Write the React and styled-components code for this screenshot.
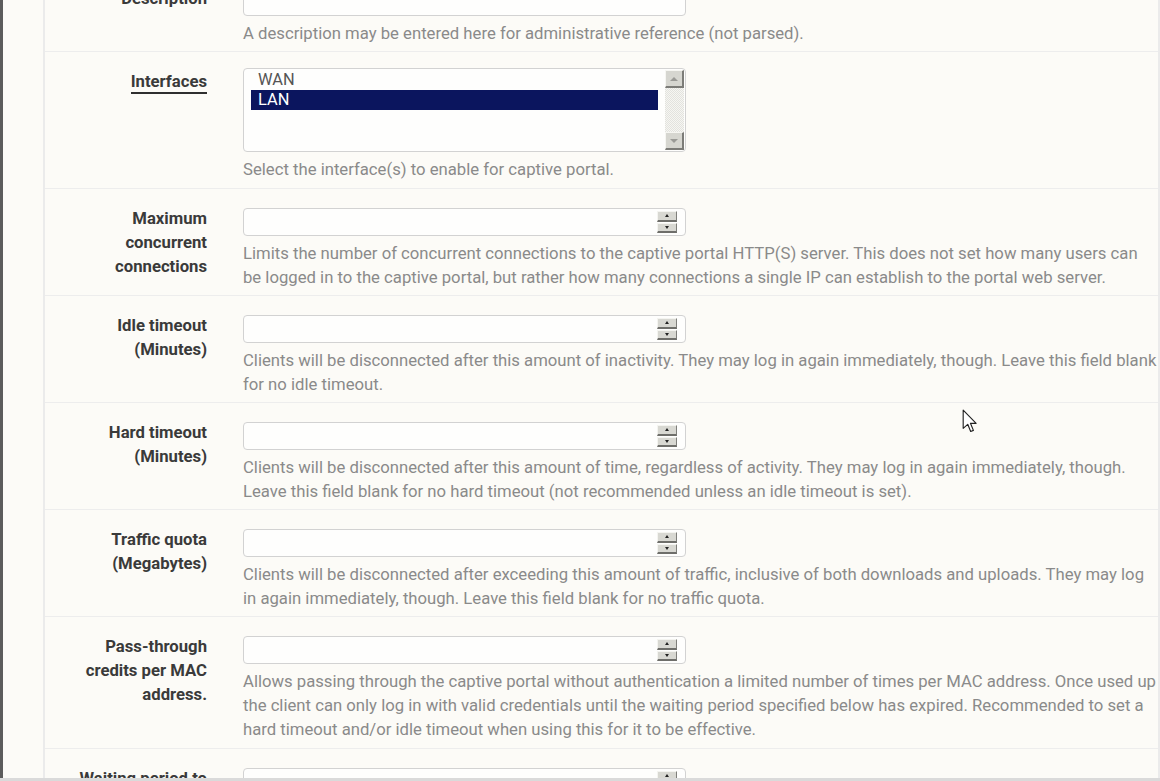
import styled, { createGlobalStyle } from "styled-components";

const GlobalStyle = createGlobalStyle`
  html, body {
    margin: 0;
    padding: 0;
    background: #fcfbf7;
    overflow: hidden;
  }
  body {
    font-family: Roboto, "Liberation Sans", sans-serif;
  }
`;

const Screen = styled.div`
  display: flex;
  flex-direction: column;
  width: 1160px;
  height: 781px;
`;

const Viewport = styled.div`
  position: relative;
  flex: 1;
  display: flex;
  overflow: hidden;
  border-left: 3px solid #5c5c5c;
  border-right: 2px solid #ebebeb;
`;

const BottomEdge = styled.div`
  height: 3px;
  background: #dadada;
`;

const Panel = styled.div`
  margin-left: 40px;
  margin-top: -31px;
  min-width: 1200px;
  border-left: 2px solid #ebebeb;
`;

const Row = styled.div`
  display: grid;
  grid-template-columns: 162px 1fr;
  column-gap: 36px;
  padding: ${(p) => p.$top}px 0 ${(p) => p.$bottom}px;
  border-bottom: 1px solid #ededed;
`;

const Label = styled.div`
  text-align: right;
  font-size: 16.7px;
  font-weight: 700;
  line-height: 24px;
  color: #3a3a3a;
  white-space: nowrap;
  padding-top: ${(p) => p.$offset || 0}px;
`;

const Abbr = styled.span`
  border-bottom: 2px solid #2f2f2f;
  padding-bottom: 1px;
`;

const Field = styled.div`
  display: flex;
  flex-direction: column;
  padding-top: 1px;
`;

const TextBox = styled.div`
  box-sizing: border-box;
  width: 443px;
  height: 28px;
  border: 1px solid #d2d2d2;
  border-radius: 4px;
  background: #fefefd;
  display: flex;
  align-items: center;
  justify-content: flex-end;
  padding-right: 8px;
`;

const Spinner = styled.div`
  display: flex;
  flex-direction: column;
  width: 20px;
  height: 22px;
  gap: 1px;
`;

const SpinBtn = styled.div`
  flex: 1;
  box-sizing: border-box;
  background: #d8d8d2;
  border-top: 1px solid #f4f4f0;
  border-left: 1px solid #f4f4f0;
  border-right: 1px solid #7e7e7a;
  border-bottom: 2px solid #6e6e6a;
  display: flex;
  align-items: center;
  justify-content: center;

  &::after {
    content: "";
    border-left: 2px solid transparent;
    border-right: 2px solid transparent;
    ${(p) =>
      p.$down ? "border-top: 3px solid #222;" : "border-bottom: 3px solid #222;"}
  }
`;

const Help = styled.div`
  margin-top: 6px;
  font-size: 16.7px;
  line-height: 24px;
  color: #8a8a8a;
  white-space: nowrap;
`;

const ListBox = styled.div`
  box-sizing: border-box;
  width: 443px;
  height: 84px;
  border: 1px solid #d2d2d2;
  border-radius: 4px;
  background: #fefefd;
  display: flex;
  padding: 1px 1px 1px 7px;
  gap: 7px;
`;

const Options = styled.div`
  flex: 1;
  display: flex;
  flex-direction: column;
`;

const Option = styled.div`
  height: 20px;
  line-height: 20px;
  padding-left: 7px;
  font-size: 16.4px;
  color: ${(p) => (p.$selected ? "#ffffff" : "#555555")};
  background: ${(p) => (p.$selected ? "#0b155e" : "transparent")};
`;

const ScrollBar = styled.div`
  width: 19px;
  display: flex;
  flex-direction: column;
  background-color: #efefeb;
  background-image: repeating-conic-gradient(#e2e2de 0% 25%, #f6f6f2 0% 50%);
  background-size: 2px 2px;
`;

const ScrollBtn = styled.div`
  height: 18px;
  box-sizing: border-box;
  background: #d6d6d0;
  border-top: 1px solid #f6f6f2;
  border-left: 1px solid #f6f6f2;
  border-right: 2px solid #7c7c78;
  border-bottom: 2px solid #7c7c78;
  display: flex;
  align-items: center;
  justify-content: center;

  &::after {
    content: "";
    border-left: 4px solid transparent;
    border-right: 4px solid transparent;
    ${(p) =>
      p.$down
        ? "border-top: 4px solid #9a9a96;"
        : "border-bottom: 4px solid #9a9a96;"}
  }
`;

const Track = styled.div`
  flex: 1;
`;

const Cursor = styled.svg`
  position: absolute;
  left: 959px;
  top: 409px;
`;

const rows = [
  {
    label: ["Maximum", "concurrent", "connections"],
    help: [
      "Limits the number of concurrent connections to the captive portal HTTP(S) server. This does not set how many users can",
      "be logged in to the captive portal, but rather how many connections a single IP can establish to the portal web server.",
    ],
  },
  {
    label: ["Idle timeout", "(Minutes)"],
    help: [
      "Clients will be disconnected after this amount of inactivity. They may log in again immediately, though. Leave this field blank",
      "for no idle timeout.",
    ],
  },
  {
    label: ["Hard timeout", "(Minutes)"],
    help: [
      "Clients will be disconnected after this amount of time, regardless of activity. They may log in again immediately, though.",
      "Leave this field blank for no hard timeout (not recommended unless an idle timeout is set).",
    ],
  },
  {
    label: ["Traffic quota", "(Megabytes)"],
    help: [
      "Clients will be disconnected after exceeding this amount of traffic, inclusive of both downloads and uploads. They may log",
      "in again immediately, though. Leave this field blank for no traffic quota.",
    ],
  },
  {
    label: ["Pass-through", "credits per MAC", "address."],
    bottom: 6,
    help: [
      "Allows passing through the captive portal without authentication a limited number of times per MAC address. Once used up",
      "the client can only log in with valid credentials until the waiting period specified below has expired. Recommended to set a",
      "hard timeout and/or idle timeout when using this for it to be effective.",
    ],
  },
  {
    label: ["Waiting period to", "restore pass-through", "credits. (Hours)"],
    help: [],
  },
];

function Lines({ lines }) {
  return lines.map((l) => <div key={l}>{l}</div>);
}

function NumberInput() {
  return (
    <TextBox>
      <Spinner>
        <SpinBtn />
        <SpinBtn $down />
      </Spinner>
    </TextBox>
  );
}

export default function App() {
  return (
    <>
      <GlobalStyle />
      <Screen>
        <Viewport>
          <Panel>
            <Row $top={18} $bottom={5}>
              <Label>Description</Label>
              <Field>
                <TextBox />
                <Help>A description may be entered here for administrative reference (not parsed).</Help>
              </Field>
            </Row>

            <Row $top={15} $bottom={6}>
              <Label $offset={3}>
                <Abbr>Interfaces</Abbr>
              </Label>
              <Field>
                <ListBox>
                  <Options>
                    <Option>WAN</Option>
                    <Option $selected>LAN</Option>
                  </Options>
                  <ScrollBar>
                    <ScrollBtn />
                    <Track />
                    <ScrollBtn $down />
                  </ScrollBar>
                </ListBox>
                <Help>Select the interface(s) to enable for captive portal.</Help>
              </Field>
            </Row>

            {rows.map((r) => (
              <Row key={r.label[0]} $top={18} $bottom={r.bottom ?? 5}>
                <Label>
                  <Lines lines={r.label} />
                </Label>
                <Field>
                  <NumberInput />
                  <Help>
                    <Lines lines={r.help} />
                  </Help>
                </Field>
              </Row>
            ))}
          </Panel>

          <Cursor width="16" height="25" viewBox="0 0 14 22">
            <path
              d="M1 1 L1 17 L5 13.5 L7.6 19.8 L10 18.8 L7.4 12.6 L12.4 12.6 Z"
              fill="#ffffff"
              stroke="#222222"
              strokeWidth="1"
              strokeLinejoin="round"
            />
          </Cursor>
        </Viewport>
        <BottomEdge />
      </Screen>
    </>
  );
}
